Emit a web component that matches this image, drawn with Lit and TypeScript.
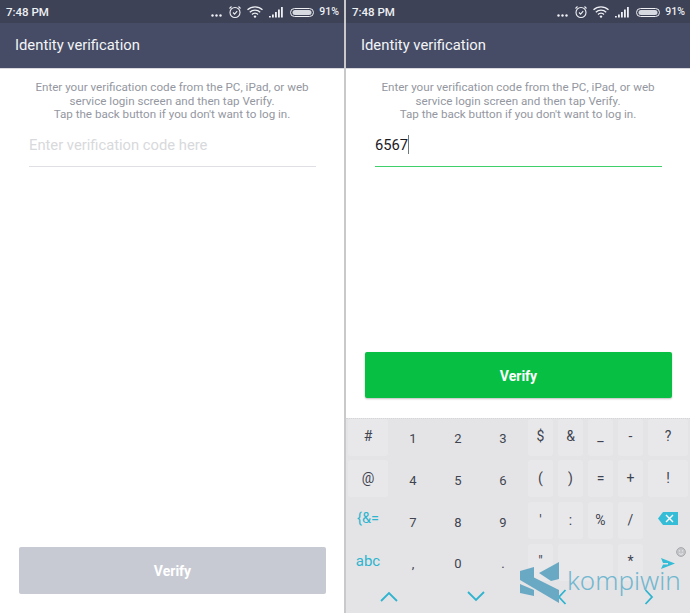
import { LitElement, html, css, svg } from "lit";
import { customElement, property } from "lit/decorators.js";

@customElement("status-bar")
class StatusBar extends LitElement {
  static styles = css`
    :host { display: flex; align-items: center; height: 23px; background: #3d4256; color: #eef0f4; font: 500 11px Roboto, sans-serif; padding: 0 5px 0 6px; box-sizing: border-box; }
    .time { flex: 1; font-size: 11.5px; }
    .row { display: flex; align-items: center; }
    svg { display: block; }
    .pct { font-size: 10.5px; margin-left: 4px; }
  `;
  render() {
    return html`<span class="time">7:48 PM</span>
      <div class="row">
        <svg width="104" height="16" viewBox="0 0 104 16">
          <g fill="#eef0f4">
            <circle cx="1.5" cy="11.5" r="1.2"/><circle cx="5.5" cy="11.5" r="1.2"/><circle cx="9.5" cy="11.5" r="1.2"/>
          </g>
          <g fill="none" stroke="#eef0f4" stroke-width="1.1">
            <circle cx="24" cy="8.5" r="5"/>
            <path d="M22 8.500l1.600 1.600 2.600-3"/>
            <path d="M18.500 4.500l2-2M29.500 4.500l-2-2"/>
            <path d="M36.500 5.800a11 11 0 0 1 15 0M38.800 8.200a7.500 7.500 0 0 1 10.400 0M41 10.500a4 4 0 0 1 6 0" stroke-width="1.3"/>
          </g>
          <circle cx="44" cy="12.6" r="1.2" fill="#eef0f4"/>
          <g fill="#eef0f4">
            <rect x="58" y="12" width="1.8" height="1.5"/><rect x="61" y="10.5" width="1.8" height="3"/><rect x="64" y="8" width="1.8" height="5.5"/><rect x="67" y="5.5" width="1.8" height="8"/><rect x="70" y="3" width="1.8" height="10.5"/>
          </g>
          <rect x="79.5" y="4.5" width="23" height="8" rx="4" fill="none" stroke="#eef0f4"/>
          <rect x="81.5" y="6" width="19" height="5" rx="2.5" fill="#d6d9e0"/>
        </svg>
        <span class="pct">91%</span>
      </div>`;
  }
}

@customElement("verify-phone")
class VerifyPhone extends LitElement {
  @property() code = "";
  @property({ type: Boolean }) active = false;
  static styles = css`
    :host { display: flex; flex-direction: column; height: 613px; width: 344px; background: #fff; font-family: Roboto, sans-serif; }
    header { height: 46px; flex: none; background: #464c65; color: #f3f4f7; font-size: 14.8px; line-height: 45px; padding-left: 15px; border-bottom: 1px solid #d8d9de; box-sizing: border-box; }
    .msg { margin: 12px 0 0; color: #94979f; font-size: 11.63px; line-height: 13.6px; text-align: center; }
    .field { margin: 12px 28px 0 29px; height: 32px; border-bottom: 1px solid #dfe0e3; font-size: 14.75px; line-height: 22px; color: #d8d9dc; }
    .field.on { border-bottom-color: #3fd06b; color: #1a1a1f; }
    .caret { display: inline-block; width: 1px; height: 19px; background: #6c7a80; vertical-align: -4px; }
    .btn { flex: none; height: 47px; margin: 0 18px 0 19px; border-radius: 2px; display: flex; align-items: center; justify-content: center; font-weight: 700; font-size: 14px; color: #fff; background: #c8cad3; }
    .btn.on { background: #07bf42; height: 46px; margin-top: 185px; padding-top: 2px; box-sizing: border-box; box-shadow: 0 1px 2px rgba(0,0,0,.25); }
    .btn.off { margin-top: auto; margin-bottom: 19px; }
  `;
  render() {
    const on = this.active;
    return html`<status-bar></status-bar>
      <header>Identity verification</header>
      <p class="msg">Enter your verification code from the PC, iPad, or web<br />service login screen and then tap Verify.<br />Tap the back button if you don't want to log in.</p>
      <div class="field ${on ? "on" : ""}">${on ? html`${this.code}<span class="caret"></span>` : "Enter verification code here"}</div>
      <div class="btn ${on ? "on" : "off"}">Verify</div>
      <slot></slot>`;
  }
}

const R1 = ["#", "1", "2", "3", "$", "&", "_", "-", "?"];
const R2 = ["@", "4", "5", "6", "(", ")", "=", "+", "!"];
const R3 = ["{&=", "7", "8", "9", "'", ":", "%", "/", "del"];
const BG = new Set(["#", "@", "$", "&", "_", "-", "?", "(", ")", "=", "+", "!", "'", ":", "%", "/"]);

@customElement("key-board")
class KeyBoard extends LitElement {
  static styles = css`
    :host { display: block; position: relative; flex: none; margin-top: 20px; height: 195px; background: #e4e4e6; border-top: 1px dotted #d4d5d8; box-sizing: border-box; font-family: Roboto, sans-serif; color: #3f4450; overflow: hidden; }
    .grid { display: grid; grid-template-columns: 40px 40px 40px 40px 25px 25px 25px 25px 40px; grid-template-rows: repeat(4, 37px); column-gap: 5px; row-gap: 4.7px; padding: 0 2px; }
    .k { display: flex; align-items: center; justify-content: center; font-size: 14px; border-radius: 3px; }
    .k.bg { background: #e8e8ea; padding-bottom: 2px; box-sizing: border-box; }
    .teal { color: #2fb4cf; }
    .num { padding-top: 3px; font-size: 13px; }
    .curly { font-size: 14.5px; padding-bottom: 4px; box-sizing: border-box; }
    .abc { font-size: 15px; padding-bottom: 3px; box-sizing: border-box; }
    .sp { grid-column: span 2; }
    .nav { display: grid; grid-template-columns: repeat(4, 86.5px); padding-top: 8px; align-items: center; }
    .nav svg { display: block; margin: 0 auto; }
    .emoji { position: absolute; left: 330px; top: 128px; display: block; }
    .logo { position: absolute; left: 174px; top: 143px; display: flex; color: #5fb0cc; font-size: 26px; font-weight: 300; font-family: "Noto Sans", sans-serif; }
    .word { margin: 1px 0 0 8px; line-height: 34px; opacity: .85; }
  `;
  key(t: string, i: number) {
    if (t === "del") return html`<div class="k"><svg width="20" height="14" viewBox="0 0 20 14" style="margin-bottom:4px"><path d="M5 0h15v13H5L0 6.5z" fill="#35bcd6"/><path d="M8 3l7 7M15 3l-7 7" stroke="#fff" stroke-width="1.4"/></svg></div>`;
    const cl = [
      "k",
      BG.has(t) ? "bg" : "",
      t === "{&=" ? "teal curly" : "",
      i >= 1 && i <= 3 ? "num" : "",
    ].join(" ");
    return html`<div class=${cl}>${t}</div>`;
  }
  render() {
    const chev = (d: string) => svg`<path d=${d} fill="none" stroke="#2fb4cf" stroke-width="1.8"/>`;
    return html`<div class="grid">
        ${[...R1, ...R2, ...R3].map((t, i) => this.key(t, i % 9))}
        <div class="k teal abc">abc</div>
        <div class="k num">,</div>
        <div class="k num">0</div>
        <div class="k num">.</div>
        <div class="k bg">"</div>
        <div class="k bg sp"></div>
        <div class="k bg">*</div>
        <div class="k"><svg width="14" height="11" viewBox="0 0 14 11" style="margin-top:3px"><path d="M0 0l14 5.5L0 11l2-4.5h5V5H2z" fill="#35bcd6"/></svg></div>
      </div>
      <div class="nav">
        <svg width="18" height="11" viewBox="0 0 18 11">${chev("M1 10l8-8 8 8")}</svg>
        <svg width="18" height="11" viewBox="0 0 18 11">${chev("M1 1l8 8 8-8")}</svg>
        <svg width="10" height="16" viewBox="0 0 10 16">${chev("M8.5 1L2 8l6.5 7")}</svg>
        <svg width="10" height="16" viewBox="0 0 10 16">${chev("M1.5 1L8 8l-6.5 7")}</svg>
      </div>
      <svg class="emoji" width="10" height="10" viewBox="0 0 10 10"><circle cx="5" cy="5" r="4.4" fill="#c4c5c8" stroke="#a9aaad"/><path d="M3 6.2a2.4 2.4 0 0 0 4 0" fill="none" stroke="#f0f0f0" stroke-width=".8"/><circle cx="3.4" cy="3.8" r=".6" fill="#f0f0f0"/><circle cx="6.6" cy="3.8" r=".6" fill="#f0f0f0"/></svg>
      <div class="logo">
        <svg width="39" height="41" viewBox="0 0 39 41"><path d="M0 9L14 5v10.500L39 28v13L0 18z" fill="#6aa9c4"/><path d="M19 11L39 0v17l-8 2z" fill="#6aa9c4"/><path d="M0 22l14 6v6L0 31z" fill="#6aa9c4"/></svg>
        <span class="word">kompiwin</span>
      </div>`;
  }
}

@customElement("app-root")
class AppRoot extends LitElement {
  static styles = css`
    :host { display: flex; width: 690px; height: 613px; background: #c9c9cc; gap: 2px; overflow: hidden; }
  `;
  render() {
    return html`<verify-phone></verify-phone>
      <verify-phone active code="6567"><key-board></key-board></verify-phone>`;
  }
}
